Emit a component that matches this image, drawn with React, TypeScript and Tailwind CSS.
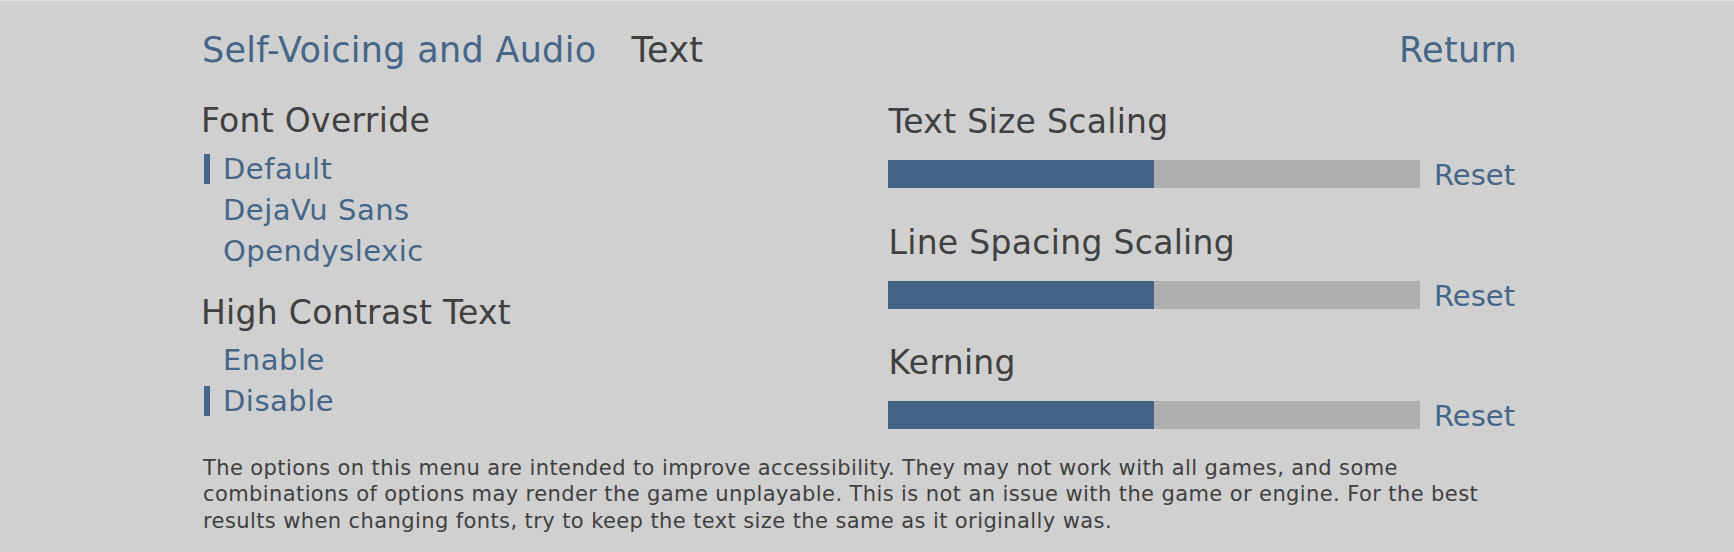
import React from "react";

const BLUE = "text-[#456689]";

function Option({ label, selected }: { label: string; selected?: boolean }) {
  return (
    <div className="flex h-[41px] items-center">
      <div className={`ml-[3px] h-[30px] w-[6px] ${selected ? "bg-[#446588]" : "bg-transparent"}`} />
      <span className={`ml-[13px] text-[29px] leading-[41px] tracking-[0.5px] ${BLUE}`}>{label}</span>
    </div>
  );
}

function Heading({ children, className = "" }: { children: React.ReactNode; className?: string }) {
  return (
    <div className={`text-[33px] leading-[40px] tracking-[0.3px] text-[#404040] ${className}`}>{children}</div>
  );
}

function SliderRow({ title, first }: { title: string; first?: boolean }) {
  return (
    <div className={first ? "" : "mt-[34.5px]"}>
      <Heading className="ml-[0.5px]">{title}</Heading>
      <div className="mt-[18px] flex h-[28px] items-start">
        <div className="flex h-[28px] w-[532px] bg-[#afafaf]">
          <div className="h-full w-[266px] bg-[#436487]" />
        </div>
        <span className={`ml-[14px] text-[29px] leading-[30px] ${BLUE}`}>Reset</span>
      </div>
    </div>
  );
}

export default function App() {
  return (
    <div className="h-[552px] w-[1734px] overflow-hidden border-t border-[#e4e4e4] bg-[#d0d0d0] font-['DejaVu_Sans',sans-serif]">
      <div className="pl-[200px] pr-[217px] pt-[29px]">
        <div className="ml-[2px] flex h-[40px] items-start text-[35px] leading-[40px] tracking-[0.3px]">
          <span className={BLUE}>Self-Voicing and Audio</span>
          <span className="ml-[35px] text-[#404040]">Text</span>
          <span className={`ml-auto ${BLUE}`}>Return</span>
        </div>

        <div className="mt-[31px] flex">
          <div className="w-[688px] pl-[1px]">
            <Heading>Font Override</Heading>
            <div className="mt-[7.5px]">
              <Option label="Default" selected />
              <Option label="DejaVu Sans" />
              <Option label="Opendyslexic" />
            </div>
            <Heading className="mt-[21px]">High Contrast Text</Heading>
            <div className="mt-[7px]">
              <Option label="Enable" />
              <Option label="Disable" selected />
            </div>
          </div>
          <div className="flex-1 pt-[1px]">
            <SliderRow title="Text Size Scaling" first />
            <SliderRow title="Line Spacing Scaling" />
            <SliderRow title="Kerning" />
          </div>
        </div>

        <p className="ml-[3px] mt-[26px] text-[21px] leading-[26.3px] tracking-[0.4px] text-[#404040]">
          The options on this menu are intended to improve accessibility. They may not work with all games, and some
          combinations of options may render the game unplayable. This is not an issue with the game or engine. For the best
          results when changing fonts, try to keep the text size the same as it originally was.
        </p>
      </div>
    </div>
  );
}
